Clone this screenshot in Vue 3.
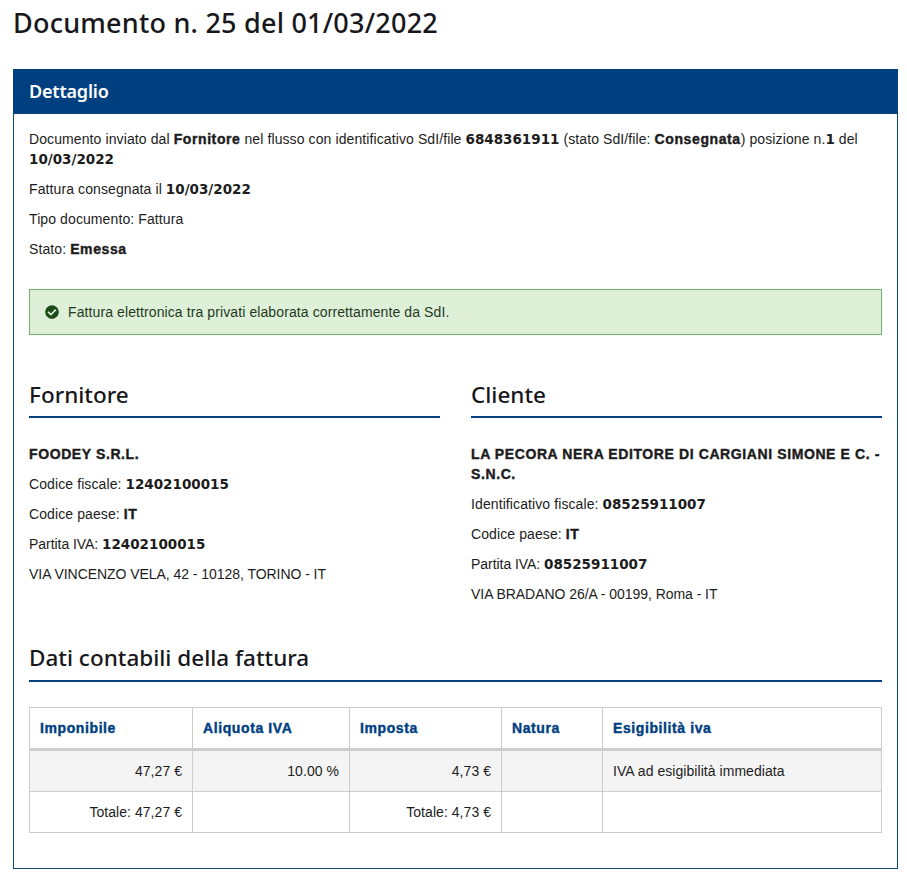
<script setup>
const columns = ['Imponibile', 'Aliquota IVA', 'Imposta', 'Natura', 'Esigibilità iva']
</script>

<template>
  <main class="page">
    <h1 class="title">Documento n. 25 del 01/03/2022</h1>
    <section class="panel">
      <header class="panel-head">Dettaglio</header>
      <div class="panel-body">
        <p>Documento inviato dal <b>Fornitore</b> nel flusso con identificativo SdI/file <b class="d">6848361911</b> (stato SdI/file: <b>Consegnata</b>) posizione n.<b class="d">1</b> del <b class="d">10/03/2022</b></p>
        <p>Fattura consegnata il <b class="d">10/03/2022</b></p>
        <p>Tipo documento: Fattura</p>
        <p>Stato: <b>Emessa</b></p>
        <div class="alert">
          <svg class="check" viewBox="0 0 512 512" width="14" height="14"><path fill="#1b4d1b" d="M504 256c0 137-111 248-248 248S8 393 8 256 119 8 256 8s248 111 248 248zM227 387l184-184c6-6 6-16 0-23l-23-22c-6-6-16-6-22 0L216 308l-70-70c-6-6-16-6-22 0l-23 22c-6 7-6 17 0 23l104 104c6 6 16 6 22 0z"/></svg>
          <span>Fattura elettronica tra privati elaborata correttamente da SdI.</span>
        </div>
        <div class="parties">
          <div class="party">
            <h2>Fornitore</h2>
            <p><b>FOODEY S.R.L.</b></p>
            <p>Codice fiscale: <b class="d">12402100015</b></p>
            <p>Codice paese: <b>IT</b></p>
            <p class="caps">Partita IVA: <b class="d">12402100015</b></p>
            <p class="caps">VIA VINCENZO VELA, 42 - 10128, TORINO - IT</p>
          </div>
          <div class="party">
            <h2>Cliente</h2>
            <p><b>LA PECORA NERA EDITORE DI CARGIANI SIMONE E C. - S.N.C.</b></p>
            <p>Identificativo fiscale: <b class="d">08525911007</b></p>
            <p>Codice paese: <b>IT</b></p>
            <p class="caps">Partita IVA: <b class="d">08525911007</b></p>
            <p class="caps">VIA BRADANO 26/A - 00199, Roma - IT</p>
          </div>
        </div>
        <h2 class="accounting">Dati contabili della fattura</h2>
        <table>
          <colgroup>
            <col class="c1" /><col class="c2" /><col class="c3" /><col class="c4" /><col class="c5" />
          </colgroup>
          <thead>
            <tr><th v-for="c in columns" :key="c">{{ c }}</th></tr>
          </thead>
          <tbody>
            <tr class="odd">
              <td class="num">47,27 €</td>
              <td class="num">10.00 %</td>
              <td class="num">4,73 €</td>
              <td></td>
              <td>IVA ad esigibilità immediata</td>
            </tr>
            <tr>
              <td class="num">Totale: 47,27 €</td>
              <td></td>
              <td class="num">Totale: 4,73 €</td>
              <td></td>
              <td></td>
            </tr>
          </tbody>
        </table>
      </div>
    </section>
  </main>
</template>

<style>
html, body { margin: 0; background: #fff; }
</style>

<style scoped>
.page {
  padding: 0 9px 6px 13px;
  font-family: "Liberation Sans", Arial, sans-serif;
  font-size: 14px;
  line-height: 20px;
  letter-spacing: 0.1px;
  color: #1c1c1c;
}
.title {
  margin: 0 0 29px;
  padding-top: 6px;
  font-family: "Noto Sans", sans-serif;
  font-size: 27px;
  font-weight: 500;
  line-height: 34px;
  letter-spacing: 0.22px;
  color: #17171c;
}
.panel { border: 1px solid #0a4a6e; }
.panel-head {
  margin: -1px -1px 0;
  height: 45px;
  padding: 0 16px;
  background: #004080;
  color: #fff;
  font-family: "Noto Sans", sans-serif;
  font-size: 18px;
  font-weight: 600;
  line-height: 45px;
  letter-spacing: -0.2px;
}
.panel-body { padding: 15px 15px 35px; }
p { margin: 0 0 10px; }
.caps { letter-spacing: -0.05px; }
b {
  font-weight: 700;
  letter-spacing: 0.6px;
  -webkit-text-stroke: 0.4px currentColor;
}
b.d {
  font-family: "DejaVu Sans", sans-serif;
  font-size: 13.5px;
  letter-spacing: 0;
  -webkit-text-stroke: 0;
}
.alert {
  display: flex;
  align-items: center;
  gap: 9px;
  height: 44px;
  margin-top: 30px;
  padding: 0 15px;
  border: 1px solid #76b06f;
  background: #dff0d8;
  color: #1f3a1f;
}
.check { flex: none; }
.parties { display: flex; gap: 31px; margin-top: 43px; }
.party { flex: 1 1 0; min-width: 0; }
h2 {
  margin: 0 0 26px;
  padding-bottom: 4px;
  border-bottom: 2px solid #004080;
  font-family: "Noto Sans", sans-serif;
  font-size: 22.5px;
  font-weight: 500;
  line-height: 34px;
  letter-spacing: 0;
  color: #17171c;
}
.accounting { margin: 27px 0 25px; padding-bottom: 5px; }
table {
  width: 100%;
  table-layout: fixed;
  border-collapse: collapse;
  border: 1px solid #ccc;
}
.c1 { width: 163px; }
.c2 { width: 157px; }
.c3 { width: 152px; }
.c4 { width: 101px; }
th, td {
  border: 1px solid #ccc;
  padding: 10px;
  height: 20px;
  text-align: left;
  letter-spacing: 0.05px;
}
th {
  border-bottom: 3px solid #ccc;
  color: #004080;
  font-weight: 700;
  letter-spacing: 0.6px;
  -webkit-text-stroke: 0.4px currentColor;
}
.odd td { background: #f4f4f4; }
.num { text-align: right; }
</style>
